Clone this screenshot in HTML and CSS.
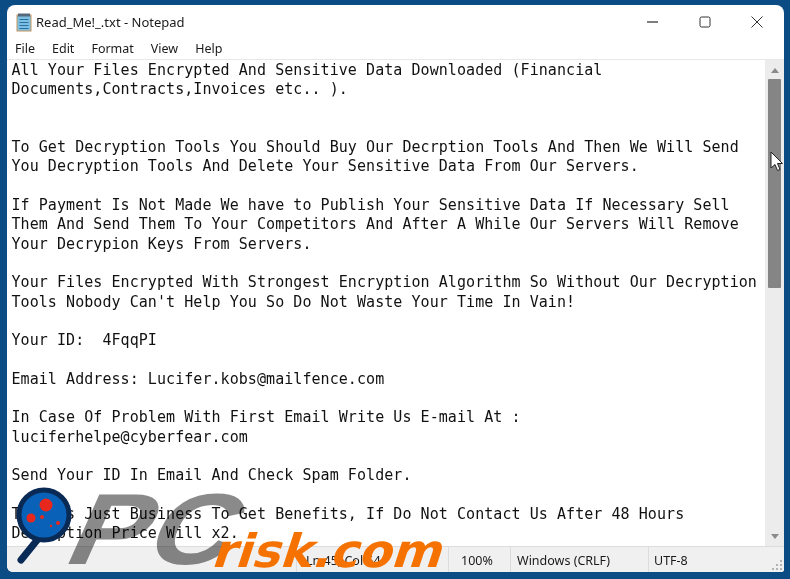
FILE: index.html
```html
<!DOCTYPE html>
<html lang="en">
  <head>
    <meta charset="UTF-8" />
    <title>Read_Me!_.txt - Notepad</title>
    <link rel="stylesheet" href="styles.css">
  </head>
  <body>
    <div class="window">
      <div class="titlebar">
        <svg class="app-icon" width="16" height="19" viewBox="0 0 16 19">
          <rect x="1" y="2" width="14" height="16" fill="#7cc0e4" stroke="#c8955a"/>
          <path d="M2 0.500h12v3h-12z" fill="#56697a"/>
          <path d="M3.500 6.500h9M3.500 9.500h9M3.500 12.500h9M3.500 15.500h9" stroke="#2c6f9e"/>
        </svg>
        <span class="title">Read_Me!_.txt - Notepad</span>
        <div class="controls">
          <svg width="12" height="12" viewBox="0 0 12 12"><path d="M0 6h11" stroke="#555" stroke-width="1.4"/></svg>
          <svg width="12" height="12" viewBox="0 0 12 12"><rect x="1" y="1" width="10" height="10" rx="1.5" fill="none" stroke="#333" stroke-width="1"/></svg>
          <svg width="12" height="12" viewBox="0 0 12 12"><path d="M0.500 0.500l11 11M11.500 0.500l-11 11" stroke="#333" stroke-width="1"/></svg>
        </div>
      </div>
      <div class="menubar">
        <span>File</span>
        <span>Edit</span>
        <span>Format</span>
        <span>View</span>
        <span>Help</span>
      </div>
      <div class="editor">
        <pre class="text">All Your Files Encrypted And Sensitive Data Downloaded (Financial
Documents,Contracts,Invoices etc.. ).


To Get Decryption Tools You Should Buy Our Decrption Tools And Then We Will Send
You Decryption Tools And Delete Your Sensitive Data From Our Servers.

If Payment Is Not Made We have to Publish Your Sensitive Data If Necessary Sell
Them And Send Them To Your Competitors And After A While Our Servers Will Remove
Your Decrypion Keys From Servers.

Your Files Encrypted With Strongest Encryption Algorithm So Without Our Decryption
Tools Nobody Can't Help You So Do Not Waste Your Time In Vain!

Your ID:  4FqqPI

Email Address: Lucifer.kobs@mailfence.com

In Case Of Problem With First Email Write Us E-mail At :
luciferhelpe@cyberfear.com

Send Your ID In Email And Check Spam Folder.

This Is Just Business To Get Benefits, If Do Not Contact Us After 48 Hours
Decryption Price Will x2.</pre>
        <div class="scrollbar">
          <div class="arrow-up"></div>
          <div class="thumb"></div>
          <div class="arrow-down"></div>
        </div>
      </div>
      <div class="statusbar">
        <span class="cell cell-pos">Ln 45, Col 54</span>
        <span class="cell cell-zoom">100%</span>
        <span class="cell cell-eol">Windows (CRLF)</span>
        <span class="cell cell-enc">UTF-8</span>
        <svg class="grip" width="10" height="10" viewBox="0 0 10 10">
          <path d="M8 0h2v2h-2zM4 4h2v2h-2zM8 4h2v2h-2zM0 8h2v2h-2zM4 8h2v2h-2zM8 8h2v2h-2z" fill="#b4b4b4"/>
        </svg>
      </div>
    </div>

    <svg class="cursor" width="14" height="22" viewBox="0 0 14 22">
      <path d="M1 1v16l4-3.500 2.500 6 2.500-1-2.500-6h5z" fill="#fff" stroke="#222" stroke-width="1"/>
    </svg>

    <div class="watermark">
      <span class="wm-pc">PC</span>
      <svg class="lens" width="60" height="80" viewBox="0 0 60 80">
        <path d="M24 54L7 75" stroke="#0a2a56" stroke-width="7" stroke-linecap="round"/>
        <circle cx="30" cy="30" r="25" fill="#0a62b8" stroke="#0a2a56" stroke-width="5"/>
        <circle cx="32" cy="20" r="6.500" fill="#e8281c"/>
        <circle cx="17" cy="33" r="4.500" fill="#e8281c"/>
        <circle cx="28" cy="32" r="2" fill="#e8281c"/>
        <circle cx="44" cy="38" r="2" fill="#e8281c"/>
        <circle cx="37" cy="41" r="1.200" fill="#e8281c"/>
      </svg>
      <span class="wm-risk">risk.com</span>
    </div>
  </body>
</html>
```

FILE: styles.css
```css
html, body {
  margin: 0;
  height: 100%;
}
body {
  width: 790px;
  height: 579px;
  background: #0b4c84;
  position: relative;
  overflow: hidden;
}
.window {
  box-sizing: border-box;
  margin: 5px 0 0 7px;
  width: 777px;
  height: 567px;
  background: #fff;
  border-radius: 8px 8px 3px 6px;
  display: flex;
  flex-direction: column;
  overflow: hidden;
  font-family: "Noto Sans", sans-serif;
  color: #1a1a1a;
}
.titlebar {
  height: 34px;
  display: flex;
  align-items: center;
  padding-left: 9px;
  flex-shrink: 0;
}
.app-icon {
  margin-right: 4px;
}
.title {
  font-size: 13px;
}
.controls {
  margin-left: auto;
  display: flex;
  gap: 40px;
  padding-right: 21px;
}
.controls svg {
  display: block;
}
.menubar {
  height: 20px;
  display: flex;
  gap: 17px;
  padding-left: 8px;
  font-size: 12.5px;
  line-height: 20px;
  flex-shrink: 0;
}
.editor {
  flex: 1;
  display: flex;
  min-height: 0;
  border-top: 1px solid #e8e8e8;
}
.text {
  flex: 1;
  margin: 0;
  padding: 1px 0 0 4.500px;
  font-family: "DejaVu Sans Mono", monospace;
  font-size: 15px;
  letter-spacing: 0.06px;
  line-height: 19.3px;
  color: #111;
}
.scrollbar {
  width: 19px;
  background: #ececec;
  display: flex;
  flex-direction: column;
  align-items: center;
}
.arrow-up {
  margin-top: 8px;
  border-left: 4px solid transparent;
  border-right: 4px solid transparent;
  border-bottom: 5px solid #8a8a8a;
}
.thumb {
  margin-top: 6px;
  width: 13px;
  height: 209px;
  background: #858585;
  border-radius: 1px;
}
.arrow-down {
  margin-top: auto;
  margin-bottom: 7px;
  border-left: 4px solid transparent;
  border-right: 4px solid transparent;
  border-top: 5px solid #8a8a8a;
}
.statusbar {
  height: 25px;
  background: #f0f0f0;
  border-top: 1px solid #dcdcdc;
  display: flex;
  flex-shrink: 0;
  font-size: 12.5px;
  line-height: 27px;
  position: relative;
}
.cell {
  box-sizing: border-box;
  padding-left: 9px;
  border-left: 1px solid #dcdcdc;
}
.cell-pos {
  margin-left: 289px;
  width: 152px;
}
.cell-zoom {
  width: 62px;
  padding-left: 12px;
}
.cell-eol {
  width: 138px;
  padding-left: 6px;
}
.cell-enc {
  padding-left: 5px;
}
.grip {
  position: absolute;
  right: 2px;
  bottom: 2px;
}
.cursor {
  position: absolute;
  left: 770px;
  top: 151px;
}
.watermark {
  position: absolute;
  left: 0;
  top: 480px;
  width: 790px;
  height: 99px;
}
.lens {
  position: absolute;
  left: 14px;
  top: 5px;
}
.wm-pc {
  position: absolute;
  left: 88px;
  top: -1px;
  font: 700 101px/1 "Liberation Sans", sans-serif;
  letter-spacing: 1px;
  color: #8a8a8a;
  mix-blend-mode: multiply;
  transform: skewX(-24deg) scaleX(1.17);
}
.wm-risk {
  position: absolute;
  left: 220px;
  top: 48px;
  font: 700 46px/1 "DejaVu Sans", sans-serif;
  color: #f57200;
  transform: skewX(-18deg) scaleX(1.04);
}
```
